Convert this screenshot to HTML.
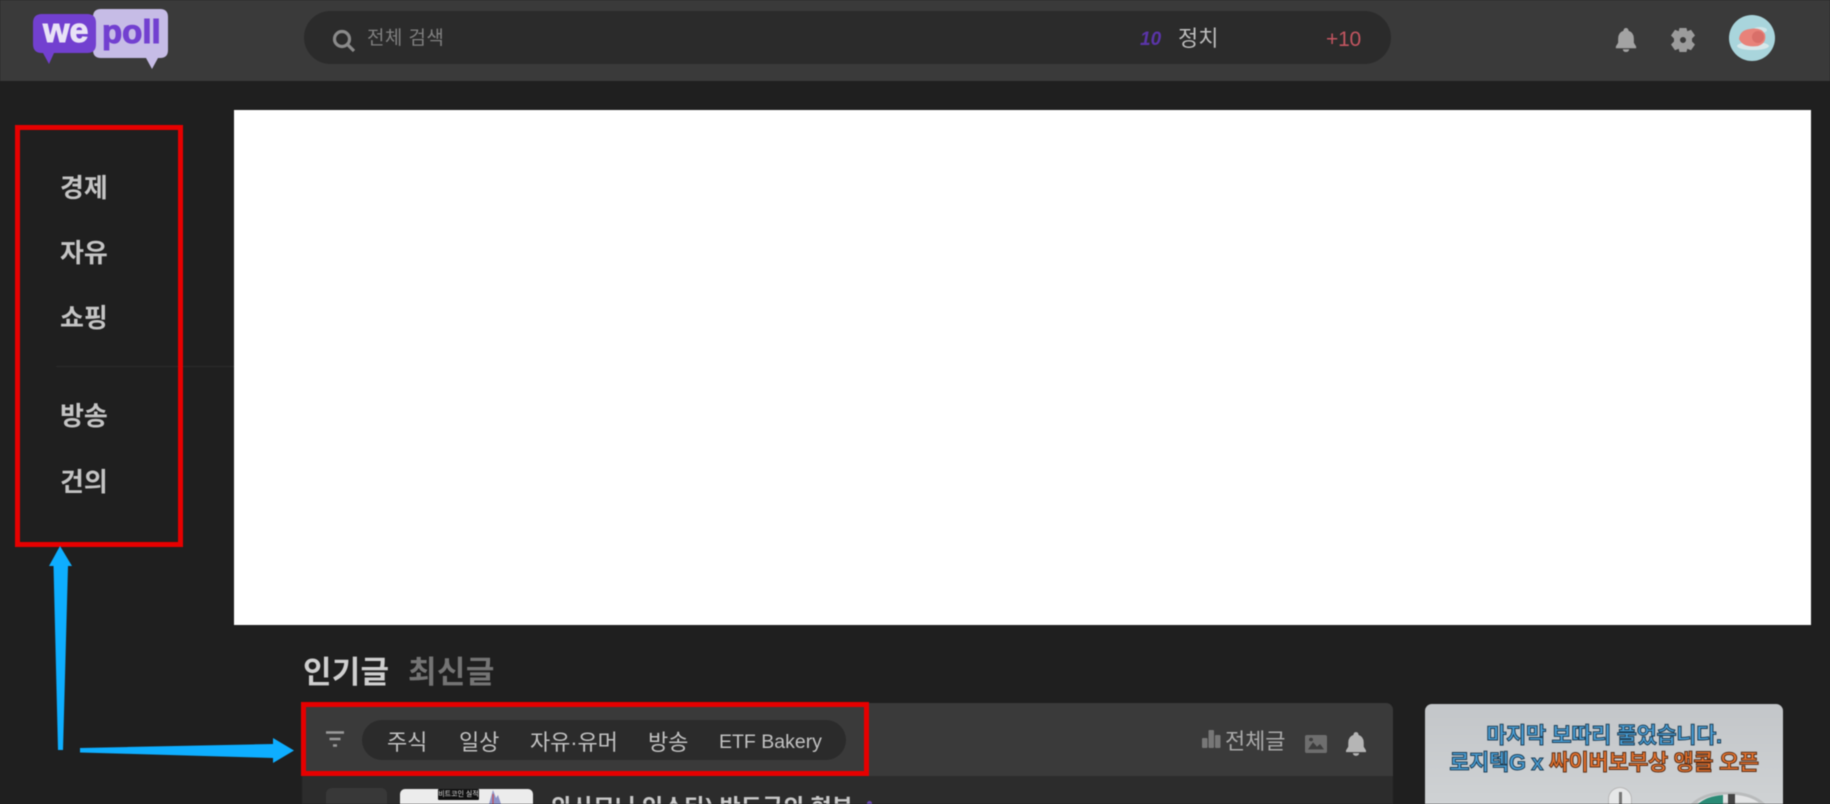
<!DOCTYPE html>
<html lang="ko"><head><meta charset="utf-8"><title>wepoll</title>
<style>
html,body{margin:0;padding:0;width:1830px;height:804px;overflow:hidden;background:#1f1f1f}
body{position:relative;font-family:"Liberation Sans","Noto Sans CJK KR",sans-serif;color:#ccc}
#w{position:absolute;left:0;top:0;width:1830px;height:804px;overflow:hidden;filter:blur(.45px)}
.a{position:absolute;white-space:nowrap;line-height:1}
.nav{left:60px;font-size:26px;font-weight:700;color:#c4c4c4;letter-spacing:-.1px}
.tab{top:732px;font-size:22px;color:#c2c2c2;letter-spacing:-.1px}
svg{position:absolute;overflow:visible}
</style></head><body><div id="w">
<div class="a" style="left:0;top:0;width:1830px;height:81px;background:#3a3a3a"></div>
<div class="a" style="left:304px;top:11px;width:1087px;height:53px;background:#2b2b2b;border-radius:27px"></div>

<!-- logo -->
<svg style="left:0;top:0" width="180" height="80">
<path d="M101 9H160Q168 9 168 17V50Q168 58 160 58H158L152 69L146 58H101Q93 58 93 50V17Q93 9 101 9Z" fill="#c6bce6"/>
<path d="M42 14H87Q96 14 96 23V44Q96 53 87 53H54L49 64L43 53H42Q33 53 33 44V23Q33 14 42 14Z" fill="#7240d0"/>
<text x="43" y="42" font-family="Liberation Sans" font-weight="700" font-size="34" fill="#e8e2f6" stroke="#e8e2f6" stroke-width="1">we</text>
<text x="102" y="43" font-family="Liberation Sans" font-weight="700" font-size="33" fill="#7240d0" stroke="#7240d0" stroke-width="1">poll</text>
</svg>

<!-- search -->
<svg style="left:332px;top:28px" width="24" height="24" fill="none" stroke="#8a8a8a" stroke-width="3.200"><circle cx="10" cy="11" r="7.500"/><path d="M15.500 16.500L22 23"/></svg>
<div class="a" style="left:367px;top:29px;font-size:19px;color:#7f7f7f;letter-spacing:.4px">전체 검색</div>
<div class="a" style="left:1140px;top:30px;font-size:19px;font-weight:700;font-style:italic;color:#5a34a8">10</div>
<div class="a" style="left:1178px;top:28px;font-size:22px;color:#bdbdbd">정치</div>
<div class="a" style="left:1326px;top:29px;font-size:21px;color:#c25560;letter-spacing:-.2px">+10</div>

<!-- header icons -->
<svg style="left:1615px;top:28px" width="22" height="24" viewBox="0 0 22 26"><path fill="#a3a3a3" d="M11 0Q13.500 0 13.800 3Q19.500 5 19.500 11.500V16L22 20V22H0V20L2.500 16V11.500Q2.500 5 8.200 3Q8.500 0 11 0ZM7.500 23H14.500Q14 26 11 26Q8 26 7.500 23Z"/></svg>
<svg style="left:1671px;top:28px" width="24" height="24" viewBox="0 0 24 24"><path fill="#9c9c9c" fill-rule="evenodd" d="M8.500 0H15.500L16.300 3.200L20 1.800L24 7.500L21 10.500V13.500L24 16.500L20 22.200L16.300 20.800L15.500 24H8.500L7.700 20.800L4 22.200L0 16.500L3 13.500V10.500L0 7.500L4 1.800L7.700 3.200ZM12 9A3 3 0 1 0 12 15A3 3 0 1 0 12 9Z"/></svg>
<svg style="left:1729px;top:15px" width="46" height="46" viewBox="0 0 46 46">
<circle cx="23" cy="23" r="23" fill="#a9d5dc"/>
<ellipse cx="24" cy="31" rx="16" ry="4" fill="#d7e8ea"/>
<ellipse cx="31" cy="15" rx="7" ry="3" fill="#cfe5e8"/>
<path d="M10 24Q11 15 21 14Q32 12 36 19Q38 28 29 31Q14 33 10 24Z" fill="#e88279"/>
<ellipse cx="29" cy="22" rx="6" ry="6" fill="#d96f69"/>
</svg>

<!-- banner -->
<div class="a" style="left:234px;top:110px;width:1577px;height:515px;background:#fff"></div>
<div class="a" style="left:56px;top:366px;width:178px;height:1px;background:#2c2c2c"></div>

<!-- left nav -->
<div class="a nav" style="top:175px">경제</div>
<div class="a nav" style="top:240px">자유</div>
<div class="a nav" style="top:305px">쇼핑</div>
<div class="a nav" style="top:403px">방송</div>
<div class="a nav" style="top:469px">건의</div>

<!-- tabs heading -->
<div class="a" style="left:303px;top:657px;font-size:31px;font-weight:700;color:#cfcfcf;letter-spacing:.2px">인기글</div>
<div class="a" style="left:408px;top:657px;font-size:31px;font-weight:700;color:#747474;letter-spacing:.4px">최신글</div>

<!-- list panel -->
<div class="a" style="left:302px;top:703px;width:1091px;height:101px;background:#2c2c2c;border-radius:7px 7px 0 0"></div>
<div class="a" style="left:302px;top:703px;width:1091px;height:73px;background:#3a3a3a;border-radius:7px 7px 0 0"></div>
<svg style="left:325px;top:730px" width="20" height="18" stroke="#9a9a9a" stroke-width="2.600"><path d="M1 2.500H19M4.500 9H15.500M8 15.500H12"/></svg>
<div class="a" style="left:362px;top:720px;width:484px;height:40px;background:#2b2b2b;border-radius:20px"></div>
<div class="a tab" style="left:387px">주식</div>
<div class="a tab" style="left:459px">일상</div>
<div class="a tab" style="left:530px">자유·유머</div>
<div class="a tab" style="left:648px">방송</div>
<div class="a tab" style="left:719px;font-size:19.500px;letter-spacing:0;top:733px">ETF Bakery</div>

<svg style="left:1201px;top:729px" width="20" height="20" fill="#777"><rect x="1" y="9" width="5.500" height="10" rx="1"/><rect x="7.500" y="1" width="5.500" height="18" rx="1"/><rect x="14" y="6" width="5.500" height="13" rx="1"/></svg>
<div class="a" style="left:1225px;top:731px;font-size:22px;color:#a9a9a9;letter-spacing:-.1px">전체글</div>
<svg style="left:1305px;top:735px" width="22" height="18" viewBox="0 0 22 20" preserveAspectRatio="none"><rect width="22" height="20" rx="2" fill="#6e6e6e"/><path d="M3 16L8 8L12 13L15 10L19 16Z" fill="#3d3d3d"/><circle cx="6" cy="5" r="2" fill="#3d3d3d"/></svg>
<svg style="left:1346px;top:732px" width="20" height="24" viewBox="0 0 22 26"><path fill="#b5b5b5" d="M11 0Q13.500 0 13.800 3Q19.500 5 19.500 11.500V16L22 20V22H0V20L2.500 16V11.500Q2.500 5 8.200 3Q8.500 0 11 0ZM7.500 23H14.500Q14 26 11 26Q8 26 7.500 23Z"/></svg>

<!-- first list row -->
<div class="a" style="left:326px;top:788px;width:61px;height:16px;background:#383838;border-radius:6px 6px 0 0"></div>
<div class="a" style="left:400px;top:789px;width:133px;height:15px;background:#ececec;border-radius:5px 5px 0 0"></div>
<div class="a" style="left:438px;top:789px;width:41px;height:11px;background:#111;border-radius:1px;font-size:7px;color:#ddd;text-align:center;line-height:11px;overflow:hidden">비트코인 실적</div>
<svg style="left:488px;top:789px" width="14" height="15"><path d="M1 15L5 1L8 9L10 6L13 15Z" fill="#8d93c8"/><path d="M5 15V5" stroke="#c44" stroke-width="1"/></svg>
<div class="a" style="left:551px;top:796px;height:8px;overflow:hidden;font-size:23px;font-weight:700;color:#c9c9c9">와사모니 인스타) 반도국의 형부</div>
<div class="a" style="left:867px;top:801px;width:5px;height:3px;border-radius:3px 3px 0 0;background:#6a4bb0"></div>

<!-- ad -->
<div class="a" style="left:1425px;top:704px;width:358px;height:100px;background:linear-gradient(#c3c6c9,#cfd2d4);border-radius:7px 7px 0 0;overflow:hidden">
 <div class="a" style="left:0;width:358px;top:21px;text-align:center;font-size:22px;font-weight:700;color:#4a9fd6;-webkit-text-stroke:1px #1d3f57;letter-spacing:-.4px">마지막 보따리 풀었습니다.</div>
 <div class="a" style="left:0;width:358px;top:48px;text-align:center;font-size:22px;font-weight:700;color:#4a9fd6;-webkit-text-stroke:1px #1d3f57;letter-spacing:-.4px">로지텍G x <span style="color:#e6732f;-webkit-text-stroke:1px #5a3018">싸이버보부상 앵콜 오픈</span></div>
 <div class="a" style="left:183px;top:83px;width:24px;height:17px;box-sizing:border-box;background:#e6e7e8;border-radius:12px 12px 0 0;border:1px solid #b8b8b8;border-bottom:0"></div>
 <div class="a" style="left:194px;top:88px;width:3px;height:12px;background:#777"></div>
 <div class="a" style="left:266px;top:88px;width:74px;height:12px;overflow:hidden">
  <svg style="left:0;top:0" width="74" height="12" viewBox="0 0 74 12"><path d="M2 12Q14 1 37 1Q60 1 72 12Z" fill="#e2e3e4" stroke="#b9bbbc" stroke-width="3"/><path d="M7 12Q16 4 32 3V12Z" fill="#2a8a75"/><rect x="37" y="2" width="7" height="10" fill="#444"/></svg>
 </div>
</div>

<!-- annotations -->
<div class="a" style="left:15px;top:125px;width:158px;height:412px;border:5px solid #e60000"></div>
<div class="a" style="left:301px;top:702px;width:558px;height:64px;border:5px solid #e60000"></div>
<svg style="left:0;top:0" width="320" height="804">
<path d="M60 546L72 566H68L63 750H58L53.500 566H49Z" fill="#0eaeff"/>
<path d="M80 748L273 744V738L294 750.500L273 763V758L80 752.500Z" fill="#0eaeff"/>
</svg>
</div></body></html>
